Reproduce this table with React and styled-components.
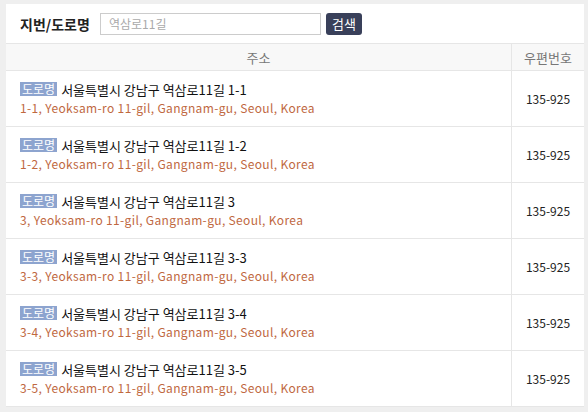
import React from "react";
import styled, { createGlobalStyle } from "styled-components";

const rows = ["1-1", "1-2", "3", "3-3", "3-4", "3-5"];

const GlobalStyle = createGlobalStyle`
  body {
    margin: 0;
    background: #efefef;
    font-family: "Noto Sans CJK KR", "Noto Sans", sans-serif;
  }
`;

function App() {
  return (
    <Page>
      <GlobalStyle />
      <Panel>
        <SearchBar>
          <Label>지번/도로명</Label>
          <Input placeholder="역삼로11길" />
          <Button>검색</Button>
        </SearchBar>
        <Table>
          <thead>
            <tr>
              <Th>주소</Th>
              <Th $narrow>우편번호</Th>
            </tr>
          </thead>
          <tbody>
            {rows.map((n) => (
              <tr key={n}>
                <AddrCell>
                  <Line>
                    <Badge>도로명</Badge>
                    서울특별시 강남구 역삼로11길 {n}
                  </Line>
                  <English>{n}, Yeoksam-ro 11-gil, Gangnam-gu, Seoul, Korea</English>
                </AddrCell>
                <ZipCell>135-925</ZipCell>
              </tr>
            ))}
          </tbody>
        </Table>
      </Panel>
    </Page>
  );
}

export default App;

const Page = styled.div`
  padding: 4px 4px 8px 6px;
  width: 588px;
  height: 412px;
  box-sizing: border-box;
`;

const Panel = styled.div`
  background: #fff;
  width: 578px;
`;

const SearchBar = styled.div`
  display: flex;
  align-items: center;
  height: 39px;
  padding: 0 14px;
  gap: 5px;
`;

const Label = styled.div`
  font-size: 14px;
  font-weight: 700;
  color: #222;
  width: 75px;
`;

const Input = styled.input`
  width: 221px;
  height: 22px;
  box-sizing: border-box;
  border: 1px solid #ccc;
  padding: 0 8px;
  font-family: inherit;
  font-size: 12px;
  outline: none;
  &::placeholder {
    color: #aaa;
  }
`;

const Button = styled.button`
  height: 22px;
  width: 36px;
  padding: 0;
  border: none;
  border-radius: 3px;
  background: #39405a;
  color: #fff;
  font-family: inherit;
  font-size: 13px;
`;

const Table = styled.table`
  width: 100%;
  border-collapse: collapse;
  table-layout: fixed;
`;

const Th = styled.th`
  width: ${(p) => (p.$narrow ? "72px" : "auto")};
  height: 26px;
  background: #f8f8f8;
  border-top: 1px solid #e6e6e6;
  border-bottom: 1px solid #e6e6e6;
  border-left: ${(p) => (p.$narrow ? "1px solid #e6e6e6" : "none")};
  font-weight: 400;
  font-size: 13px;
  color: #777;
  padding: 0;
`;

const AddrCell = styled.td`
  height: 55px;
  padding: 0 14px;
  border-bottom: 1px solid #e6e6e6;
  vertical-align: middle;
`;

const ZipCell = styled.td`
  border-left: 1px solid #e6e6e6;
  border-bottom: 1px solid #e6e6e6;
  text-align: center;
  font-size: 12px;
  color: #222;
`;

const Line = styled.div`
  font-size: 13px;
  color: #111;
  line-height: 18px;
`;

const Badge = styled.span`
  display: inline-block;
  background: #8da4cf;
  color: #fff;
  font-size: 12px;
  line-height: 14px;
  padding: 0 2px;
  margin-right: 4px;
  vertical-align: 1px;
`;

const English = styled.div`
  font-size: 12px;
  color: #c0683f;
  line-height: 17px;
  letter-spacing: 0.35px;
`;
